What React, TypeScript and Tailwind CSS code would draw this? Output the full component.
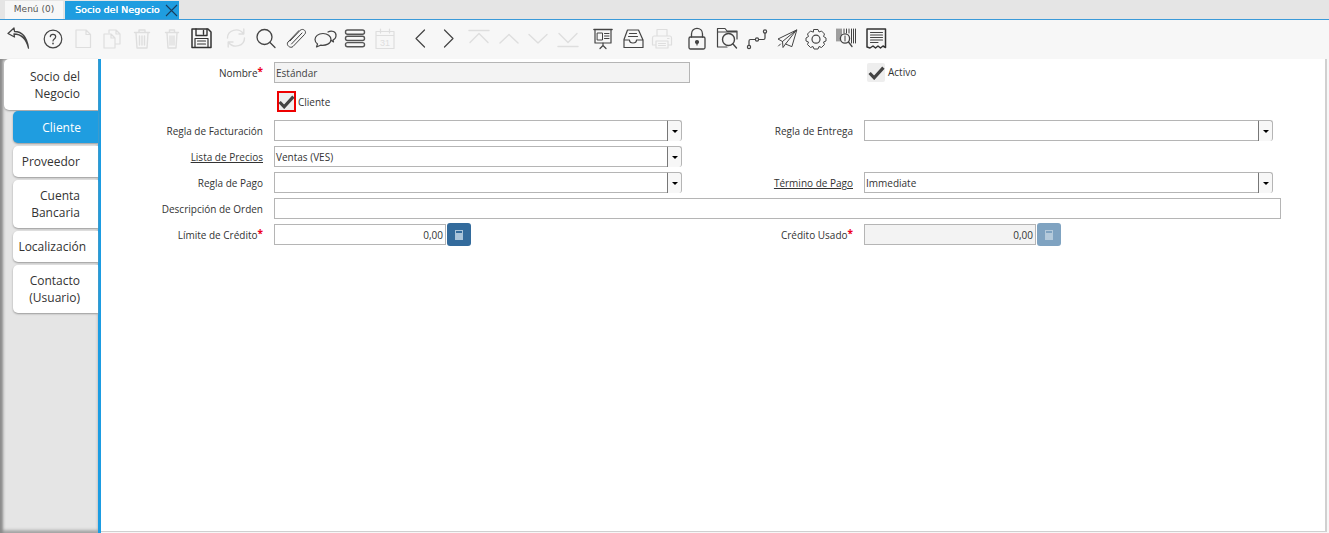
// Business partner window: tab strip, action toolbar, side tabs and the customer form.
import type { ReactNode } from "react";

const DARK = "#444";
const OFF = "#dedede";

function Ico({ off, children }: { off?: boolean; children: ReactNode }) {
  return (
    <div className="flex w-[29.7px] justify-center">
      <svg width="28" height="28" viewBox="0 0 28 28" fill="none" stroke={off ? OFF : DARK} strokeWidth="1.2" strokeLinecap="round" strokeLinejoin="round">
        {children}
      </svg>
    </div>
  );
}

function Toolbar() {
  return (
    <div className="flex h-[39px] items-center gap-[5.3px] bg-[#f7f7f7] pb-[3px] pl-[3px]">
      <div className="flex">
        <Ico>
          <path d="M10 4 L4 9.5 L10.5 13 L10 10 C17 10 22 14 24.5 24 C23 14 19 7.5 10.5 7.5 Z" strokeWidth="1.3" />
        </Ico>
      </div>
      <div className="flex">
        <Ico>
          <circle cx="14" cy="15" r="8.8" />
          <path d="M11.3 12.6 C11.5 9.5 16.7 9.7 16.7 12.8 C16.7 15 14 15 14 17" />
          <path d="M14 19.4 V19.8" strokeWidth="1.6" />
        </Ico>
        <Ico off>
          <path d="M7 6 H17 L21.5 10.5 V23.5 H7 Z M17 6 V10.5 H21.5" />
        </Ico>
        <Ico off>
          <path d="M11 9 V6 H18 L22 10 V20 H17.5 M18 6 V10 H22" />
          <path d="M6 10 H13 L17 14 V24 H6 Z M13 10 V14 H17" />
        </Ico>
        <Ico off>
          <path d="M6.5 8.5 H21.5 M11 8 V6 H17 V8 M8 9 L9 24 H19 L20 9 M11.5 12 V21 M14 12 V21 M16.5 12 V21" strokeWidth="1.4" />
        </Ico>
        <Ico off>
          <path d="M7.5 8.5 H20.5 M11.5 8 V6 H16.5 V8 M9 9 L10 24 H18 L19 9 M12 12 V21 M14 12 V21 M16 12 V21" strokeWidth="1.4" />
        </Ico>
        <Ico>
          <path d="M5 5 H21 L24 8 V23.5 H5 Z" stroke="#333" strokeWidth="1.5" />
          <path d="M9 5 V11.5 H20 V5 M16.5 6.5 V10" stroke="#333" strokeWidth="1.4" />
          <path d="M8 23 V14.5 H21 V23 M10.5 17 H18.5 M10.5 20 H18.5" stroke="#333" />
        </Ico>
      </div>
      <div className="flex">
        <Ico off>
          <path d="M5.5 14 C5.5 6 16 3 21.5 9.5 M21.8 5 V10 H17 M22.5 14 C22.5 22 12 25 6.5 18.5 M6.2 23 V18 H11" strokeWidth="1.4" />
        </Ico>
        <Ico>
          <circle cx="12.5" cy="13" r="7.5" strokeWidth="1.3" />
          <path d="M18 18.5 L23 23.5" strokeWidth="1.3" />
        </Ico>
        <Ico>
          <path d="M8 17 L18 6.5 C21 3.5 25.5 7.5 22.5 10.5 L11 22.5 C8.5 25 3.5 21 6 18 L17 6.5 M9.5 20 L20 9" strokeWidth="1" />
        </Ico>
        <Ico>
          <path d="M17 8 C20.5 6 25.5 7.5 25 12 C24.8 14 23.5 15.5 22 16 L22.5 18 L20.3 16.5" />
          <path d="M12 9.5 C7 9.5 4 12.5 4 15.5 C4 17.5 5 19 6.5 20 L5.5 23 L9.5 21.2 C15 22 20 19.5 20 15.5 C20 12 16.5 9.5 12 9.5 Z" />
        </Ico>
        <Ico>
          <rect x="4.5" y="6" width="19" height="4.2" rx="2" stroke="#555" strokeWidth="1.4" />
          <rect x="4.5" y="12.3" width="19" height="4.2" rx="2" stroke="#555" strokeWidth="1.4" />
          <rect x="4.5" y="18.6" width="19" height="4.2" rx="2" stroke="#555" strokeWidth="1.4" />
        </Ico>
        <Ico off>
          <path d="M5 7.5 H23 V24.5 H5 Z M5 11.5 H23 M9.5 5 V9 M18.5 5 V9" />
          <text x="14" y="22" textAnchor="middle" fontSize="9" fontFamily="'Liberation Sans', sans-serif" fill={OFF} stroke="none">31</text>
        </Ico>
      </div>
      <div className="flex">
        <Ico>
          <path d="M18.5 6 L10 14.5 L18.5 23" />
        </Ico>
        <Ico>
          <path d="M9.5 6 L18 14.5 L9.5 23" />
        </Ico>
        <Ico off>
          <path d="M4 6.5 H24 M5 18.5 L14 9.5 L23 18.5" strokeWidth="1.4" />
        </Ico>
        <Ico off>
          <path d="M5 19 L14 10.5 L23 19" strokeWidth="1.4" />
        </Ico>
        <Ico off>
          <path d="M5 10.5 L14 19 L23 10.5" strokeWidth="1.4" />
        </Ico>
        <Ico off>
          <path d="M5 9.5 L14 18.5 L23 9.5 M4 22.5 H24" strokeWidth="1.4" />
        </Ico>
      </div>
      <div className="flex">
        <Ico>
          <path d="M5 5.5 H23" strokeWidth="1.6" />
          <path d="M6 6 V19 H22 V6" />
          <path d="M8.5 9 H13.5 V16 H8.5 Z M15.5 9.5 H20 M15.5 12 H20 M15.5 14.5 H20" strokeWidth="1" />
          <path d="M14 19 V22 M11 24.5 L14 21.5 L17 24.5" />
        </Ico>
        <Ico>
          <path d="M8.5 6 H19.5 L24 16 V23.5 H5 V15.5 Z M5 16 H10.5 C10.5 20 17.5 20 17.5 16 H24 M9.5 12.5 H18.5 M10.5 9.5 H17.5" />
        </Ico>
        <Ico off>
          <path d="M9 12 V5.5 H19 V12 M6 12 H22 C23 12 23.5 13 23.5 14 V21 H20 M8 21 H4.5 V14 C4.5 13 5 12 6 12 M8 17 H20 V24 H8 Z M10.5 19.5 H17.5 M10.5 21.5 H17.5 M19.5 14.5 H21" />
        </Ico>
      </div>
      <div className="flex">
        <Ico>
          <path d="M8.5 13 V10 C8.5 2.5 19.5 2.5 19.5 10 V13" strokeWidth="1.3" />
          <rect x="6" y="13" width="16" height="12" rx="1.5" strokeWidth="1.3" />
          <circle cx="14" cy="18" r="1.5" fill={DARK} />
          <path d="M14 19 V21" />
        </Ico>
        <Ico>
          <path d="M14 23 H4.5 V4.5 H12 L14 7 H24 V15 M5 8 H23" />
          <circle cx="15.5" cy="15.5" r="6" strokeWidth="1.4" />
          <path d="M20 20 L23.5 24" strokeWidth="1.4" />
        </Ico>
        <Ico>
          <circle cx="6" cy="23" r="1.6" />
          <circle cx="14" cy="15.5" r="1.6" />
          <circle cx="22" cy="7.5" r="1.6" />
          <path d="M6 21.4 V17 C6 16 6.5 15.5 7.5 15.5 H12.4 M15.6 15.5 H20.5 C21.5 15.5 22 15 22 14 V9.1" />
        </Ico>
        <Ico>
          <path d="M23.5 6 L5 15 L9.5 17.5 L23.5 6 L12.5 20 L18.5 22.5 Z M9.5 17.5 L10 23.5 L12.5 20 M7.5 20 L5.5 22" strokeWidth="1" />
        </Ico>
        <Ico>
          <path d="M12 5.5 H16 L17 8 L19.5 7 L22.5 10 L21.5 12.5 L24 14 V17 L21.5 18 L22.5 20.5 L19.5 23.5 L17 22.5 L16 25 H12 L11 22.5 L8.5 23.5 L5.5 20.5 L6.5 18 L4 17 V14 L6.5 12.5 L5.5 10 L8.5 7 L11 8 Z" strokeWidth="1" />
          <circle cx="14" cy="15.2" r="4" />
        </Ico>
        <Ico>
          <path d="M5 5 V17 M7 5 V17 M9 5 V12 M12 5 V9 M14.5 5 V9 M17 5 V9 M19.5 5 V19 M21.5 5 V19 M23.5 5 V19" strokeWidth="1" />
          <circle cx="13" cy="14.5" r="4.6" fill="#f7f7f7" strokeWidth="1.3" />
          <path d="M13 12 V17" strokeWidth="1" />
          <path d="M16.5 18 L20 22.5" strokeWidth="1.3" />
        </Ico>
        <Ico>
          <path d="M5 5 H23.5 V23.5 L21 22 L18.5 24 L16 22 L13.5 24 L11 22 L8 24 L5 23 Z" stroke="#333" strokeWidth="1.5" />
          <path d="M8.5 8.5 H20.5 M8.5 11 H20.5 M8.5 13.5 H20.5 M8.5 16 H20.5 M8.5 18.5 H16" strokeWidth="1.1" />
        </Ico>
      </div>
    </div>
  );
}

type SideTab = { lines: string[]; active?: boolean; top?: boolean; h: string; pr?: string };

const SIDE_TABS: SideTab[] = [
  { lines: ["Socio del", "Negocio"], top: true, h: "h-[51px]" },
  { lines: ["Cliente"], active: true, h: "h-[32px]", pr: "pr-[17px]" },
  { lines: ["Proveedor"], h: "h-[31px]" },
  { lines: ["Cuenta", "Bancaria"], h: "h-[48px]" },
  { lines: ["Localización"], h: "h-[31px]", pr: "pr-[12px]" },
  { lines: ["Contacto", "(Usuario)"], h: "h-[48px]" },
];

function Sidebar() {
  return (
    <div className="w-[101px] shrink-0 border-r-[3px] border-[#1b9ce2] bg-[#e5e5e5] shadow-[inset_3px_1px_3px_#8a8a8a,inset_0_-3px_3px_#aaa]">
      <div className="flex flex-col gap-[3px] font-['Open_Sans',sans-serif] text-[12px] leading-[17px]">
        {SIDE_TABS.map((t) => (
          <div
            key={t.lines[0]}
            className={`flex flex-col justify-center rounded-l-[5px] text-right ${t.h} ${t.pr ?? "pr-[18px]"} ${
              t.top ? "ml-1 mb-[-2px]" : "ml-[13px]"
            } ${t.active ? "bg-[#1f9de0] text-white" : "bg-white text-[#333]"} shadow-[0_1px_2px_#999]`}
          >
            {t.lines.map((l) => (
              <span key={l} className="whitespace-nowrap">
                {l}
              </span>
            ))}
          </div>
        ))}
      </div>
    </div>
  );
}

function Label({ children, req, link }: { children: ReactNode; req?: boolean; link?: boolean }) {
  return (
    <div className="flex items-center justify-end pr-[11px] pt-[2px] text-[#333]">
      <span className={link ? "underline" : ""}>{children}</span>
      {req && <span className="mb-1 font-bold text-[#ee0022]">*</span>}
    </div>
  );
}

function Combo({ value }: { value?: string }) {
  return (
    <div className="flex h-[21px]">
      <div className="flex-1 border border-r-0 border-[#b5b5b5] bg-white px-px leading-[20px] text-[#333]">{value}</div>
      <div className="flex w-[15px] items-center justify-center rounded-r-[3px] border border-b-0 border-[#b5b5b5] border-l-[#777] bg-[#f7f7f7]">
        <span className="mt-px border-x-[3.5px] border-t-[3.5px] border-x-transparent border-t-black" />
      </div>
    </div>
  );
}

function Amount({ off }: { off?: boolean }) {
  return (
    <div className="flex h-[21px] gap-px">
      <div className={`w-[172px] border border-[#b5b5b5] px-[2px] text-right leading-[20px] text-[#333] ${off ? "bg-[#f3f3f3]" : "bg-white"}`}>
        0,00
      </div>
      <div className={`mt-[-1px] flex h-[23px] w-6 items-center justify-center rounded-[3px] ${off ? "bg-[#7fa3c1]" : "bg-[#336b9c]"}`}>
        <svg width="8" height="10" viewBox="0 0 8 10" fill={off ? "#b4cadb" : "#a9c4da"}>
          <path d="M0 0 H8 V10 H0 Z M1 1 V3 H7 V1 Z" fillRule="evenodd" />
        </svg>
      </div>
    </div>
  );
}

function Check({ red }: { red?: boolean }) {
  return (
    <div className={`flex items-center justify-center bg-[#eee] ${red ? "h-[21px] w-[19px] border-2 border-[#ee0000]" : "h-[19px] w-[18px] rounded-[2px]"}`}>
      <svg className="shrink-0" width="17" height="14" viewBox="0 0 16 13" fill="none" stroke="#444" strokeWidth="3">
        <path d="M1.5 6.5 L5.8 11 L14.5 1.5" />
      </svg>
    </div>
  );
}

function Form() {
  return (
    <div className="grid grid-cols-[173px_408px_182px_409px_8px] grid-rows-[21px_27px_21px_21px_21px_21px_21px] gap-y-[5px] pt-[3px] font-['Open_Sans',sans-serif] text-[10px]">
      <Label req>Nombre</Label>
      <div className="mr-[-8px] border border-[#b5b5b5] bg-[#f3f3f3] px-px leading-[20px] text-[#444]">Estándar</div>
      <div />
      <div className="col-span-2 ml-[3px] flex items-center gap-[3px] text-[#333]">
        <Check />
        Activo
      </div>

      <div />
      <div className="col-span-4 ml-[3px] flex items-center gap-[2px] text-[#333]">
        <Check red />
        <span className="mt-[2px]">Cliente</span>
      </div>

      <Label>Regla de Facturación</Label>
      <Combo />
      <Label>Regla de Entrega</Label>
      <Combo />
      <div />

      <Label link>Lista de Precios</Label>
      <Combo value="Ventas (VES)" />
      <div className="col-span-3" />

      <Label>Regla de Pago</Label>
      <Combo />
      <Label link>Término de Pago</Label>
      <Combo value="Immediate" />
      <div />

      <Label>Descripción de Orden</Label>
      <div className="col-span-4 border border-[#b5b5b5] bg-white" />

      <Label req>Límite de Crédito</Label>
      <Amount />
      <Label req>Crédito Usado</Label>
      <Amount off />
      <div />
    </div>
  );
}

export default function App() {
  return (
    <div className="flex h-[533px] w-full flex-col overflow-hidden bg-[#f7f7f7]">
      <div className="flex h-5 items-end gap-[2px] border-b border-[#3a9ad9] bg-[#e5e5e5] pl-[5px] font-['DejaVu_Sans',sans-serif] text-[9px]">
        <div className="flex h-[18px] w-[58px] items-center justify-center bg-[#f7f7f7] text-[#555]">Menú (0)</div>
        <div className="flex h-[18px] w-[114px] items-center bg-[#1f9de0] pl-[10px] text-[9.5px] font-medium whitespace-nowrap text-white">
          <span className="flex-1 [text-shadow:0.3px_0_0_white]">Socio del Negocio</span>
          <svg className="mr-[1px] shrink-0" width="13" height="13" viewBox="0 0 13 13" stroke="#1a3d5c" strokeWidth="1.1">
            <path d="M1 1 L12 12 M12 1 L1 12" />
          </svg>
        </div>
      </div>
      <Toolbar />
      <div className="flex min-h-0 flex-1">
        <Sidebar />
        <div className="mb-px mr-[2px] flex-1 border-r-2 border-b border-[#d0d0d0] bg-white">
          <Form />
        </div>
      </div>
    </div>
  );
}
